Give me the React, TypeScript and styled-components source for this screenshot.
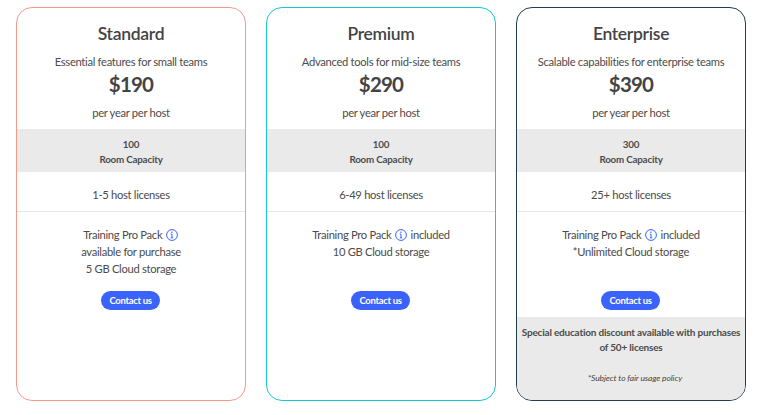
import React from "react";
import styled, { createGlobalStyle } from "styled-components";

const Global = createGlobalStyle`
  html, body { margin: 0; padding: 0; background: #fff; }
  body { font-family: "Lato", "Noto Sans", sans-serif; color: #4b4b4b; }
`;

const Page = styled.main`
  display: grid;
  grid-template-columns: repeat(3, 230px);
  gap: 20px;
  padding: 7px 0 0 16px;
  width: 765px;
  height: 415px;
  box-sizing: border-box;
  overflow: hidden;
`;

const Card = styled.section<{ $accent: string }>`
  display: flex;
  flex-direction: column;
  height: 394px;
  box-sizing: border-box;
  border: 1px solid ${(p) => p.$accent};
  border-radius: 16px;
  overflow: hidden;
  text-align: center;
`;

const Header = styled.header`
  height: 121px;
  padding-top: 14px;
  box-sizing: border-box;
`;

const Title = styled.h2`
  margin: 0;
  font-size: 17.5px;
  line-height: 24px;
  font-weight: 600;
  letter-spacing: -0.3px;
  color: #444;
`;

const BodyText = styled.p`
  margin: 0;
  font-size: 11.2px;
  line-height: 18px;
  letter-spacing: -0.3px;
`;

const Subtitle = styled(BodyText)`
  margin-top: 7px;
`;

const Price = styled.div`
  font-size: 20.5px;
  line-height: 28px;
  font-weight: 700;
  letter-spacing: -0.8px;
  color: #444;
  margin-top: -1px;
`;

const Period = styled(BodyText)`
  margin-top: 6px;
`;

const Capacity = styled.div`
  height: 43px;
  padding-top: 8px;
  box-sizing: border-box;
  background: #eaeaea;
  font-size: 9.8px;
  line-height: 15px;
  font-weight: 700;
  letter-spacing: -0.2px;
`;

const Licenses = styled.div`
  height: 40px;
  padding-top: 14px;
  box-sizing: border-box;
  border-bottom: 1px solid #e6e6e6;
  font-size: 11.2px;
  line-height: 18px;
  letter-spacing: -0.3px;
`;

const Features = styled.div`
  height: 66px;
  padding-top: 14px;
  box-sizing: border-box;
  font-size: 11.2px;
  line-height: 17px;
  letter-spacing: -0.3px;
`;

const Info = styled.svg`
  display: inline-block;
  width: 12px;
  height: 12px;
  vertical-align: -2px;
  margin: 0 1px;
`;

const ButtonRow = styled.div`
  display: flex;
  justify-content: center;
  padding: 13px 1px 0 0;
`;

const Contact = styled.a`
  display: block;
  width: 59px;
  height: 19px;
  border-radius: 10px;
  background: #3b63fb;
  color: #fff;
  font-size: 9.5px;
  line-height: 19px;
  font-weight: 700;
  letter-spacing: -0.3px;
`;

const Note = styled.div`
  flex: 1;
  margin-top: 7px;
  padding: 8px 2px 0;
  background: #eaeaea;
`;

const NoteText = styled.p`
  margin: 0;
  font-size: 10px;
  line-height: 15px;
  font-weight: 700;
  letter-spacing: -0.2px;
`;

const Fine = styled.p`
  margin: 17px 0 0;
  padding-left: 8px;
  font-size: 8.5px;
  line-height: 12px;
  font-style: italic;
  letter-spacing: -0.1px;
  color: #444;
`;

const InfoIcon = () => (
  <Info viewBox="0 0 12 12" fill="none" stroke="#3b63fb">
    <circle cx="6" cy="6" r="5.4" strokeWidth="1" />
    <path d="M6 5.2v3.6M4.8 5.2H6M4.8 8.8h2.4" strokeWidth="1" />
    <circle cx="5.9" cy="3.2" r="0.7" fill="#3b63fb" stroke="none" />
  </Info>
);

const plans = [
  {
    name: "Standard",
    accent: "#f6998c",
    sub: "Essential features for small teams",
    price: "$190",
    cap: "100",
    lic: "1-5 host licenses",
    suffix: "",
    lines: ["available for purchase", "5 GB Cloud storage"],
  },
  {
    name: "Premium",
    accent: "#16c8d0",
    sub: "Advanced tools for mid-size teams",
    price: "$290",
    cap: "100",
    lic: "6-49 host licenses",
    suffix: " included",
    lines: ["10 GB Cloud storage"],
  },
  {
    name: "Enterprise",
    accent: "#1f3f4c",
    sub: "Scalable capabilities for enterprise teams",
    price: "$390",
    cap: "300",
    lic: "25+ host licenses",
    suffix: " included",
    lines: ["*Unlimited Cloud storage"],
    note: true,
  },
];

export default function App() {
  return (
    <Page>
      <Global />
      {plans.map((p) => (
        <Card key={p.name} $accent={p.accent}>
          <Header>
            <Title>{p.name}</Title>
            <Subtitle>{p.sub}</Subtitle>
            <Price>{p.price}</Price>
            <Period>per year per host</Period>
          </Header>
          <Capacity>
            {p.cap}
            <br />
            Room Capacity
          </Capacity>
          <Licenses>{p.lic}</Licenses>
          <Features>
            Training Pro Pack <InfoIcon />
            {p.suffix}
            {p.lines.map((l) => (
              <div key={l}>{l}</div>
            ))}
          </Features>
          <ButtonRow>
            <Contact>Contact us</Contact>
          </ButtonRow>
          {p.note && (
            <Note>
              <NoteText>Special education discount available with purchases of 50+ licenses</NoteText>
              <Fine>*Subject to fair usage policy</Fine>
            </Note>
          )}
        </Card>
      ))}
    </Page>
  );
}
